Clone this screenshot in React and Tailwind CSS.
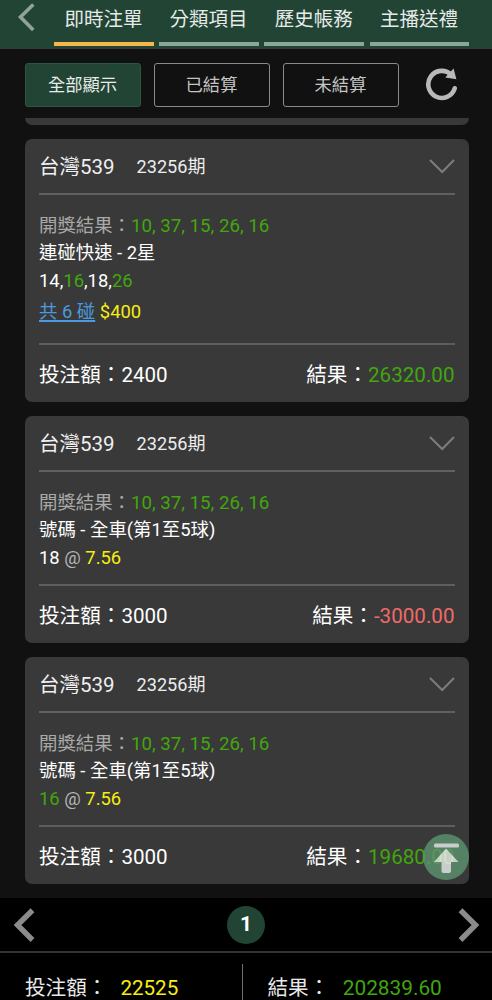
const tabs = ['即時注單', '分類項目', '歷史帳務', '主播送禮'];

const filters = ['全部顯示', '已結算', '未結算'];

const bets = [
    {
        id: 1,
        play: '連碰快速 - 2星',
        numbers: [
            { value: '14', hit: false },
            { value: '16', hit: true },
            { value: '18', hit: false },
            { value: '26', hit: true },
        ],
        combo: '共 6 碰',
        price: '$400',
        stake: '2400',
        result: '26320.00',
    },
    {
        id: 2,
        play: '號碼 - 全車(第1至5球)',
        numbers: [{ value: '18', hit: false }],
        odds: '7.56',
        stake: '3000',
        result: '-3000.00',
    },
    {
        id: 3,
        play: '號碼 - 全車(第1至5球)',
        numbers: [{ value: '16', hit: true }],
        odds: '7.56',
        stake: '3000',
        result: '19680.00',
    },
];

function Header() {
    return (
        <header className="flex h-[49px] shrink-0 border-b border-[#343a37] bg-[#224434]">
            <button className="w-[54px] shrink-0">
                <svg width="54" height="48" fill="none" stroke="#8fa499" strokeWidth="3.6">
                    <path d="M33.3 4.5 20.5 17 33.3 30" />
                </svg>
            </button>
            <nav className="flex gap-[5.4px]">
                {tabs.map((tab, i) => (
                    <button
                        key={tab}
                        className={`h-[46px] w-[99.8px] border-b-4 pr-px pb-[5px] text-[19.5px] leading-[37px] whitespace-nowrap text-[#e6ebe8] ${
                            i === 0 ? 'border-[#f7b64c]' : 'border-[#8ba596]'
                        }`}
                    >
                        <span className="relative top-px">{tab}</span>
                    </button>
                ))}
            </nav>
        </header>
    );
}

function Filters() {
    return (
        <div className="flex h-[69px] shrink-0 items-start gap-[13px] pt-[14px] pl-[25px]">
            {filters.map((f, i) => (
                <button
                    key={f}
                    className={`h-11 w-[116px] rounded-[3px] border pr-px text-[17.3px] leading-[43px] ${
                        i === 0
                            ? 'border-[#2a5742] bg-[#224434] text-[#e8ece9]'
                            : 'border-[#8a8a8a] text-[#c4c4c4]'
                    }`}
                >
                    {f}
                </button>
            ))}
            <svg className="mt-[5px] ml-[13px]" width="34" height="34" fill="none">
                <path
                    d="M26.5 7A13.5 13.5 0 1 0 29.7 20.3"
                    stroke="#b9b9b9"
                    strokeWidth="4.6"
                    strokeLinecap="round"
                />
                <path d="M28.6 0.6 31.4 11.2 20.2 9.6Z" fill="#b9b9b9" />
            </svg>
        </div>
    );
}

function BetCard({ bet }) {
    const lost = bet.result.startsWith('-');

    return (
        <article className="shrink-0 rounded-[7px] bg-[#393939] px-[14px] text-white">
            <div className="flex h-[56px] items-center border-b-2 border-[#606060]">
                <h2 className="pt-0.5 text-[20.5px] leading-[54px] text-[#f0f0f0]">台灣539</h2>
                <span className="mt-0.5 ml-[22px] text-[18.1px] text-[#ededed]">23256期</span>
                <svg
                    className="ml-auto"
                    width="26"
                    height="16"
                    fill="none"
                    stroke="#7d7d7d"
                    strokeWidth="2"
                >
                    <path d="M1 2 13.2 14 25 2" />
                </svg>
            </div>

            <div className="border-b-2 border-[#5e5e5e] pt-[17px] pb-[12.8px] text-[18.4px] leading-[27.4px]">
                <p className="h-[27.4px] text-[#a9a9a9]">
                    開獎結果：
                    <span className="text-[18.7px] text-[#41a70d]">10, 37, 15, 26, 16</span>
                </p>
                <p className="h-[27.4px]">{bet.play}</p>
                <p className="h-[27.4px]">
                    {bet.numbers.map((n, i) => (
                        <span key={n.value}>
                            {i > 0 && ','}
                            <span className={n.hit ? 'text-[#41a70d]' : ''}>{n.value}</span>
                        </span>
                    ))}
                    {bet.odds && (
                        <>
                            <span className="text-[#b4b4b4]"> @ </span>
                            <span className="text-[#f6ed12]">{bet.odds}</span>
                        </>
                    )}
                </p>
                {bet.combo && (
                    <p className="h-9 leading-9">
                        <a className="text-[#4c9ade] underline decoration-2 underline-offset-2">
                            {bet.combo}
                        </a>{' '}
                        <span className="text-[#f6ed12]">{bet.price}</span>
                    </p>
                )}
            </div>

            <div className="flex h-[57px] justify-between text-[20.6px] leading-[61px]">
                <p>投注額：{bet.stake}</p>
                <p>
                    結果：
                    <span className={lost ? 'text-[#f26a68]' : 'text-[#41a70d]'}>{bet.result}</span>
                </p>
            </div>
        </article>
    );
}

function BackToTop() {
    return (
        <button className="absolute top-[834px] left-[422.5px] size-[46px] rounded-full bg-[#5d946f] opacity-80">
            <svg width="46" height="46" fill="#f0f3f1">
                <rect x="11" y="9.5" width="25" height="4" rx="1.5" />
                <path d="M23 14.5 35.5 28H28v9a2 2 0 0 1-2 2h-5.5a2 2 0 0 1-2-2V28H11Z" />
            </svg>
        </button>
    );
}

function Pagination() {
    return (
        <div className="flex h-[55px] shrink-0 items-center justify-between border-b-2 border-[#343434] bg-black px-[12px]">
            <svg width="24" height="36" fill="none" stroke="#8b8b8b" strokeWidth="5.4">
                <path d="M20.5 3.3 5.5 18 20.5 33" />
            </svg>
            <span className="size-[38px] rounded-full bg-[#224434] text-center text-[21px] leading-[36px] font-bold text-white">
                1
            </span>
            <svg width="24" height="36" fill="none" stroke="#8b8b8b" strokeWidth="5.4">
                <path d="M4.5 3.3 19.5 18 4.5 33" />
            </svg>
        </div>
    );
}

function Totals() {
    return (
        <footer className="flex h-[47px] shrink-0 bg-black text-[20.6px] leading-[70px] text-[#e8e8e8]">
            <p className="w-[242px] pl-[25px]">
                投注額：<span className="ml-[13px] text-[#f6ed12]">22525</span>
            </p>
            <div className="mt-[11px] w-px bg-[#707070]" />
            <p className="pl-[24.5px]">
                結果：<span className="ml-[13.5px] text-[20.8px] text-[#41a70d]">202839.60</span>
            </p>
        </footer>
    );
}

export default function App() {
    return (
        <div className="relative flex h-[1000px] w-[492px] flex-col overflow-hidden bg-[#111] font-[Roboto,'Noto_Sans_CJK_TC',sans-serif]">
            <Header />
            <Filters />
            <main className="flex h-[780px] shrink-0 flex-col gap-[14px] overflow-hidden pr-[23.5px] pl-[25px]">
                {/* tail of the card scrolled past */}
                <div className="h-[7px] shrink-0 rounded-b-[7px] bg-[#393939]" />
                {bets.map(bet => (
                    <BetCard key={bet.id} bet={bet} />
                ))}
            </main>
            <Pagination />
            <Totals />
            <BackToTop />
        </div>
    );
}
